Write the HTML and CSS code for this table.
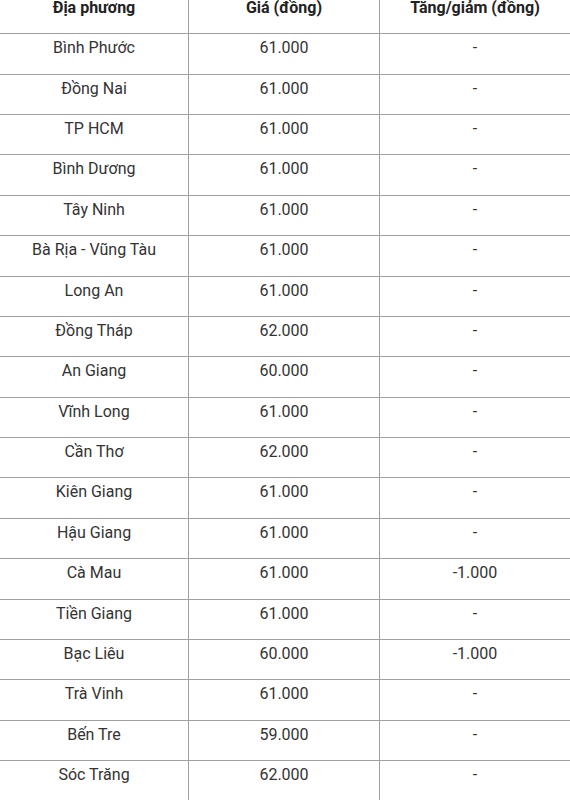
FILE: index.html
```html
<!DOCTYPE html>
<html lang="vi">
<head>
<meta charset="utf-8">
<link rel="stylesheet" href="styles.css">
</head>
<body>
<table class="price-table">
  <colgroup>
    <col class="col-a">
    <col class="col-b">
    <col class="col-c">
  </colgroup>
  <thead>
    <tr><th>Địa phương</th><th>Giá (đồng)</th><th>Tăng/giảm (đồng)</th></tr>
  </thead>
  <tbody>
    <tr><td>Bình Phước</td><td>61.000</td><td>-</td></tr>
    <tr><td>Đồng Nai</td><td>61.000</td><td>-</td></tr>
    <tr><td>TP HCM</td><td>61.000</td><td>-</td></tr>
    <tr><td>Bình Dương</td><td>61.000</td><td>-</td></tr>
    <tr><td>Tây Ninh</td><td>61.000</td><td>-</td></tr>
    <tr><td>Bà Rịa - Vũng Tàu</td><td>61.000</td><td>-</td></tr>
    <tr><td>Long An</td><td>61.000</td><td>-</td></tr>
    <tr><td>Đồng Tháp</td><td>62.000</td><td>-</td></tr>
    <tr><td>An Giang</td><td>60.000</td><td>-</td></tr>
    <tr><td>Vĩnh Long</td><td>61.000</td><td>-</td></tr>
    <tr><td>Cần Thơ</td><td>62.000</td><td>-</td></tr>
    <tr><td>Kiên Giang</td><td>61.000</td><td>-</td></tr>
    <tr><td>Hậu Giang</td><td>61.000</td><td>-</td></tr>
    <tr><td>Cà Mau</td><td>61.000</td><td>-1.000</td></tr>
    <tr><td>Tiền Giang</td><td>61.000</td><td>-</td></tr>
    <tr><td>Bạc Liêu</td><td>60.000</td><td>-1.000</td></tr>
    <tr><td>Trà Vinh</td><td>61.000</td><td>-</td></tr>
    <tr><td>Bến Tre</td><td>59.000</td><td>-</td></tr>
    <tr><td>Sóc Trăng</td><td>62.000</td><td>-</td></tr>
  </tbody>
</table>
</body>
</html>
```
FILE: styles.css
```css
html, body {
  margin: 0;
  padding: 0;
  background: #fff;
}
body {
  font-family: Roboto, "Liberation Sans", sans-serif;
  font-size: 16px;
  color: #333;
  overflow: hidden;
}
.price-table {
  border-collapse: collapse;
  table-layout: fixed;
  width: 571px;
  margin: -7px 0 0 -1px;
}
.col-a { width: 189px; }
.col-b { width: 191px; }
.col-c { width: 191px; }
.price-table th,
.price-table td {
  border: 1px solid #a0a0a0;
  text-align: center;
  vertical-align: top;
  line-height: 24px;
  padding: 2px 4px 13.4px;
  white-space: nowrap;
}
.price-table th {
  font-weight: 700;
  color: #222;
  padding-bottom: 13.2px;
}
.price-table td {
  font-weight: 400;
}
```
